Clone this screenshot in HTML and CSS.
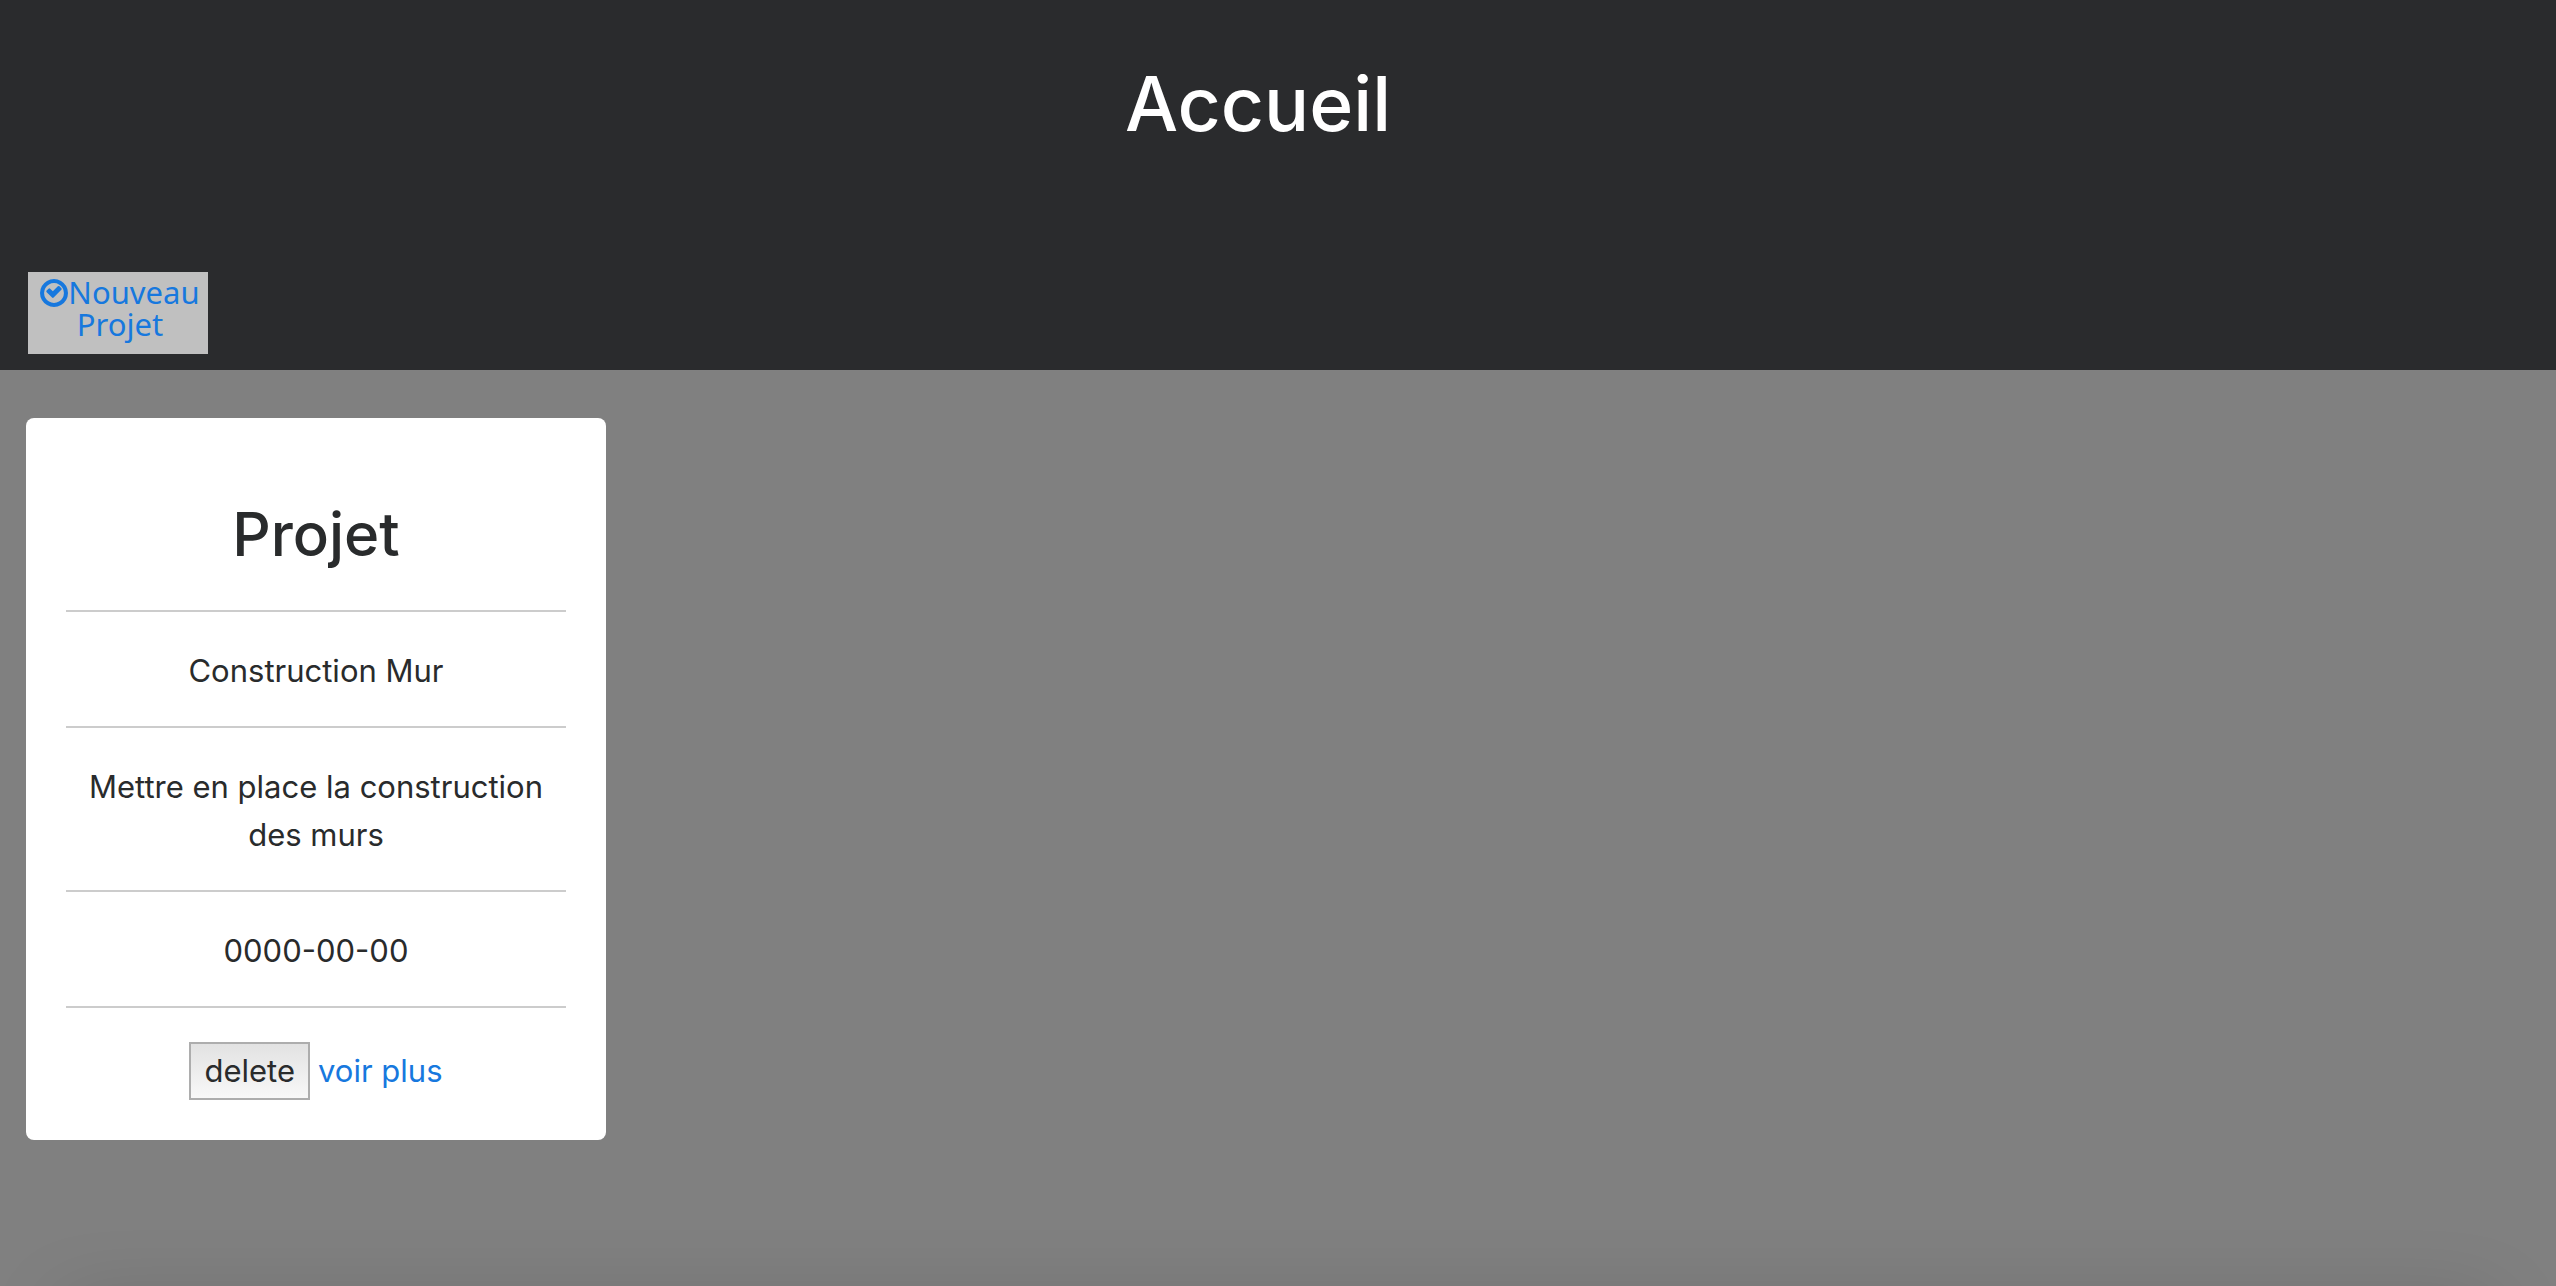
FILE: index.html
```
<!DOCTYPE html>
<html lang="fr">
<head>
<meta charset="utf-8">
<meta name="viewport" content="width=device-width, initial-scale=1">
<title>Accueil</title>
<link rel="stylesheet" href="styles.css">
</head>
<body>
<header class="header">
  <h1 class="header-title">Accueil</h1>
  <a class="new-project" href="#nouveau"><svg class="new-project-icon" viewBox="0 128 1536 1536" aria-hidden="true"><path fill="currentColor" d="M1171 723l-422 422q-19 19-45 19t-45-19l-294-294q-19-19-19-45t19-45l102-102q19-19 45-19t45 19l147 147 275-275q19-19 45-19t45 19l102 102q19 19 19 45t-19 45zm141 173q0-148-73-273t-198-198-273-73-273 73-198 198-73 273 73 273 198 198 273 73 273-73 198-198 73-273zm224 0q0 209-103 385.500t-279.500 279.500-385.500 103-385.500-103-279.500-279.500-103-385.500 103-385.500 279.500-279.500 385.500-103 385.500 103 279.500 279.500 103 385.500z"/></svg>Nouveau Projet</a>
</header>
<main class="projects">
  <article class="card">
    <h2 class="card-title">Projet</h2>
    <p class="card-row">Construction Mur</p>
    <p class="card-row">Mettre en place la construction des murs</p>
    <p class="card-row">0000-00-00</p>
    <div class="card-actions">
      <button class="delete" type="button">delete</button>
      <a class="more" href="#projet">voir plus</a>
    </div>
  </article>
</main>
</body>
</html>
```
FILE: styles.css
```
* {
  box-sizing: border-box;
}

body {
  margin: 0;
  min-height: 100vh;
  background: #808080;
  color: #292b2c;
  font-family: Inter, "Liberation Sans", sans-serif;
  font-size: 31px;
  line-height: 48px;
}

/* soft shade along the bottom edge of the window */
body::after {
  content: "";
  position: fixed;
  left: 64px;
  right: 64px;
  bottom: -64px;
  height: 40px;
  box-shadow: 0 0 80px rgba(0, 0, 0, 0.22);
  pointer-events: none;
}

a {
  color: #1778de;
  text-decoration: none;
}

.header {
  display: flex;
  flex-direction: column;
  align-items: flex-start;
  padding: 60px 68px 16px 28px;
  background: #2a2b2d;
}

.header-title {
  align-self: stretch;
  margin: 0 0 124px;
  color: #fff;
  font-size: 75px;
  font-weight: 500;
  line-height: 88px;
  text-align: center;
}

.new-project {
  width: 180px;
  padding: 4px 6px 14px 10px;
  background: #c0c0c0;
  font-family: "Noto Sans", sans-serif;
  font-size: 31px;
  line-height: 32px;
  text-align: center;
}

.new-project-icon {
  width: 28px;
  height: 28px;
  vertical-align: -3px;
}

.projects {
  padding: 48px 26px;
}

.card {
  max-width: 580px;
  padding: 80px 40px 40px;
  border-radius: 8px;
  background: #fff;
  text-align: center;
}

.card-title {
  margin: 0;
  padding-bottom: 40px;
  font-size: 60px;
  font-weight: 500;
  line-height: 72px;
}

.card-row {
  margin: 0;
  padding: 35px 16px 31px;
  border-top: 2px solid #ccc;
}

.card-actions {
  display: flex;
  justify-content: center;
  align-items: center;
  gap: 8px;
  padding-top: 34px;
  border-top: 2px solid #ccc;
}

.delete {
  padding: 3px 13px;
  border: 2px solid #adadad;
  background: linear-gradient(#e2e2e2, #f8f8f8);
  color: inherit;
  font: inherit;
}
```
